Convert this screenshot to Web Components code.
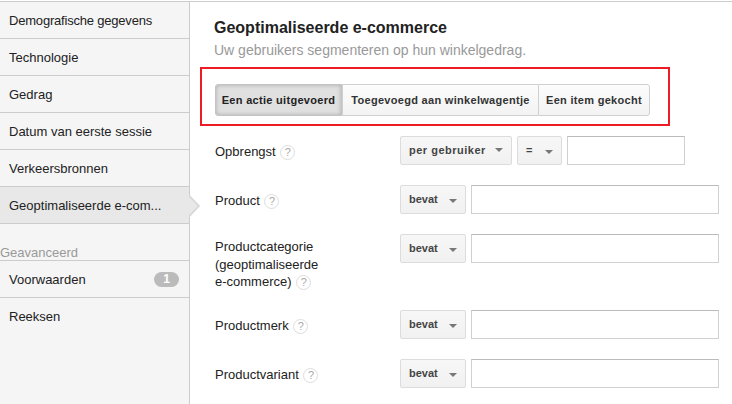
<!DOCTYPE html>
<html>
<head>
<meta charset="utf-8">
<title>Geoptimaliseerde e-commerce</title>
<style>
  html, body { margin: 0; padding: 0; background: #fff; overflow: hidden; }
  body { font: 13px "Liberation Sans", Arial, sans-serif; color: #222; }
</style>
</head>
<body>
<segment-page>
  <side-nav slot="nav">
    <nav-item tight>Demografische gegevens</nav-item>
    <nav-item>Technologie</nav-item>
    <nav-item>Gedrag</nav-item>
    <nav-item>Datum van eerste sessie</nav-item>
    <nav-item>Verkeersbronnen</nav-item>
    <nav-item active>Geoptimaliseerde e-com...</nav-item>
    <nav-heading>Geavanceerd</nav-heading>
    <nav-item count="1">Voorwaarden</nav-item>
    <nav-item last>Reeksen</nav-item>
  </side-nav>
  <section-head title="Geoptimaliseerde e-commerce" sub="Uw gebruikers segmenteren op hun winkelgedrag."></section-head>
  <red-outline>
    <button-group>
      <group-button active>Een actie uitgevoerd</group-button>
      <group-button>Toegevoegd aan winkelwagentje</group-button>
      <group-button>Een item gekocht</group-button>
    </button-group>
  </red-outline>
  <form-row label="Opbrengst">
    <drop-down wide>per gebruiker</drop-down>
    <drop-down bold compact>=</drop-down>
    <text-box short></text-box>
  </form-row>
  <form-row label="Product"><drop-down bold>bevat</drop-down><text-box></text-box></form-row>
  <form-row label="Productcategorie (geoptimaliseerde e-commerce)" tall><drop-down bold>bevat</drop-down><text-box></text-box></form-row>
  <form-row label="Productmerk"><drop-down bold>bevat</drop-down><text-box></text-box></form-row>
  <form-row label="Productvariant"><drop-down bold>bevat</drop-down><text-box></text-box></form-row>
</segment-page>

<script>
const shadow = (el, html) => {
  el.attachShadow({mode: 'open'}).innerHTML = html;
};

class SegmentPage extends HTMLElement {
  constructor() {
    super();
    shadow(this, `
      <style>
        :host {
          display: flex; width: 732px; height: 404px; overflow: hidden; box-sizing: border-box;
          margin-top: 1px; border-top: 1px solid #ccc;
        }
        main { flex: 1; padding: 17px 0 0 24px; min-width: 0; }
      </style>
      <slot name="nav"></slot>
      <main><slot></slot></main>`);
  }
}

class SideNav extends HTMLElement {
  constructor() {
    super();
    shadow(this, `
      <style>
        :host {
          display: block; box-sizing: border-box; width: 190px; height: 404px; flex: none;
          background: #f5f5f5; border-right: 1px solid #ccc;
        }
      </style>
      <slot></slot>`);
  }
}

class NavItem extends HTMLElement {
  constructor() {
    super();
    const count = this.getAttribute('count');
    shadow(this, `
      <style>
        :host {
          display: flex; align-items: center; justify-content: space-between; position: relative;
          box-sizing: border-box; height: 37px; padding: 0 10px 0 9px;
          border-bottom: 1px solid #ccc; font-size: 13px; color: #222;
        }
        :host([tight]) { letter-spacing: -.2px; }
        :host([last]) { border-bottom: 0; }
        :host([active]) { background: #e8e8e8; }
        .badge {
          width: 25px; height: 15px; border-radius: 8px; background: #bbb; color: #fff;
          font: bold 12px/15px "Liberation Sans", Arial, sans-serif; text-align: center;
        }
        svg { position: absolute; left: 189px; top: 7px; }
      </style>
      <span><slot></slot></span>
      ${count ? `<span class="badge">${count}</span>` : ''}
      ${this.hasAttribute('active') ? `<svg width="12" height="24" viewBox="0 0 12 24"><path d="M0 1.5 L10 12 L0 22.5Z" fill="#e8e8e8"/><path d="M0 1.5 L10 12 L0 22.5" fill="none" stroke="#d6d6d6" stroke-width="1.6"/></svg>` : ''}`);
  }
}

class NavHeading extends HTMLElement {
  constructor() {
    super();
    shadow(this, `
      <style>
        :host {
          display: block; box-sizing: border-box; height: 37px; padding-top: 21px;
          border-bottom: 1px solid #ccc; font-size: 13px; line-height: 15px; color: #999;
        }
      </style>
      <slot></slot>`);
  }
}

class SectionHead extends HTMLElement {
  constructor() {
    super();
    shadow(this, `
      <style>
        :host { display: block; }
        h2 { margin: 0; font-size: 16px; line-height: 18px; font-weight: bold; color: #222; }
        p { margin: 4px 0 0; font-size: 14px; line-height: 18px; color: #999; }
      </style>
      <h2>${this.getAttribute('title')}</h2>
      <p>${this.getAttribute('sub')}</p>`);
  }
}

class RedOutline extends HTMLElement {
  constructor() {
    super();
    shadow(this, `
      <style>
        :host {
          display: block; box-sizing: border-box; width: 470px; height: 59px;
          margin: 8px 0 10px -14px; padding: 15px 0 0 13px; border: 2px solid #ed1c24;
        }
      </style>
      <slot></slot>`);
  }
}

class ButtonGroup extends HTMLElement {
  constructor() {
    super();
    shadow(this, `
      <style>
        :host { display: inline-flex; height: 32px; }
        ::slotted(group-button:first-child) { border-radius: 3px 0 0 3px; width: 127px; }
        ::slotted(group-button:nth-child(2)) { width: 196px; }
        ::slotted(group-button:last-child) { border-radius: 0 3px 3px 0; border-right: 1px solid #d0d0d0; width: 112px; }
      </style>
      <slot></slot>`);
  }
}

class GroupButton extends HTMLElement {
  constructor() {
    super();
    shadow(this, `
      <style>
        :host {
          display: flex; align-items: center; justify-content: center; box-sizing: border-box;
          border: 1px solid #d0d0d0; border-right: 0;
          background: linear-gradient(#fcfcfc, #f3f3f3);
          font-size: 11px; font-weight: bold; color: #333; letter-spacing: .3px; white-space: nowrap;
        }
        :host([active]) {
          background: #e0e0e0; border-color: #c4c4c4; border-right: 1px solid #c4c4c4; color: #222;
          box-shadow: inset 0 0 4px #aaa;
        }
      </style>
      <slot></slot>`);
  }
}

class FormRow extends HTMLElement {
  constructor() {
    super();
    // one span per word, so each wrapped line of the label has its own box
    const words = this.getAttribute('label').split(' ').map(w => `<span>${w}</span>`).join(' ');
    shadow(this, `
      <style>
        :host {
          display: grid; grid-template-columns: 186px 1fr; margin-bottom: 20px; font-size: 13px;
          height: 29px;
        }
        :host([tall]) { height: 56px; }
        .label { width: 112px; padding: 7px 0 0 1px; line-height: 17.5px; color: #222; }
        :host([tall]) .label { padding-top: 4px; }
        .controls { display: flex; gap: 5px; align-items: flex-start; }
        .help {
          display: inline-block; box-sizing: border-box; width: 15px; height: 15px; margin-left: 1px;
          border: 1px solid #ddd; border-radius: 50%; color: #aaa; vertical-align: 0;
          font: 11px/13px "Liberation Sans", Arial, sans-serif; text-align: center;
        }
      </style>
      <div class="label">${words} <span class="help">?</span></div>
      <div class="controls"><slot></slot></div>`);
  }
}

class DropDown extends HTMLElement {
  constructor() {
    super();
    shadow(this, `
      <style>
        :host {
          display: flex; align-items: center; justify-content: space-between; box-sizing: border-box;
          width: 66px; height: 29px; padding: 0 8px 2px 8px; flex: none;
          border: 1px solid #dcdcdc; border-radius: 2px;
          background: linear-gradient(#f7f7f7, #f1f1f1);
          font-size: 11px; font-weight: bold; color: #444;
        }
        :host([wide]) { width: 112px; letter-spacing: .5px; }
        :host([compact]) { width: 45px; }
        i { width: 0; height: 0; border: 4px solid transparent; border-top: 4px solid #777; border-bottom: 0; margin-top: 4px; }
        :host([wide]) i { margin-top: 0; }
      </style>
      <span><slot></slot></span><i></i>`);
  }
}

class TextBox extends HTMLElement {
  constructor() {
    super();
    shadow(this, `
      <style>
        :host {
          display: block; box-sizing: border-box; width: 248px; height: 29px;
          border: 1px solid #d0d0d0; border-top-color: #bbb; background: #fff; flex: none;
        }
        :host([short]) { width: 118px; }
      </style>`);
  }
}

customElements.define('segment-page', SegmentPage);
customElements.define('side-nav', SideNav);
customElements.define('nav-item', NavItem);
customElements.define('nav-heading', NavHeading);
customElements.define('section-head', SectionHead);
customElements.define('red-outline', RedOutline);
customElements.define('button-group', ButtonGroup);
customElements.define('group-button', GroupButton);
customElements.define('form-row', FormRow);
customElements.define('drop-down', DropDown);
customElements.define('text-box', TextBox);
</script>
</body>
</html>
